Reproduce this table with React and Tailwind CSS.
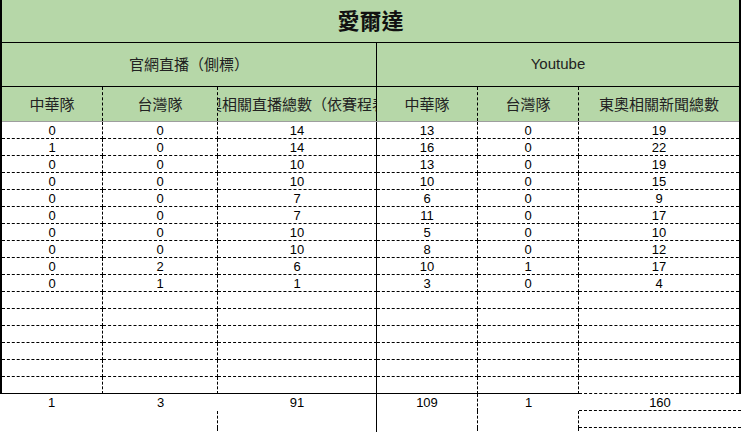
import React from "react";

const W = ["w-[101px]", "w-[115px]", "w-[159px]", "w-[101px]", "w-[101px]", "w-[160px]"];
const R = [
  "border-r border-black [border-right-style:dashed]",
  "border-r border-black [border-right-style:dashed]",
  "border-r border-black",
  "border-r border-black [border-right-style:dashed]",
  "border-r border-black [border-right-style:dashed]",
  "",
];

const rows = [
  [0, 0, 14, 13, 0, 19],
  [1, 0, 14, 16, 0, 22],
  [0, 0, 10, 13, 0, 19],
  [0, 0, 10, 10, 0, 15],
  [0, 0, 7, 6, 0, 9],
  [0, 0, 7, 11, 0, 17],
  [0, 0, 10, 5, 0, 10],
  [0, 0, 10, 8, 0, 12],
  [0, 2, 6, 10, 1, 17],
  [0, 1, 1, 3, 0, 4],
  ["", "", "", "", "", ""],
  ["", "", "", "", "", ""],
  ["", "", "", "", "", ""],
  ["", "", "", "", "", ""],
  ["", "", "", "", "", ""],
  ["", "", "", "", "", ""],
];

const heads = ["中華隊", "台灣隊", "東奧相關直播總數（依賽程表）", "中華隊", "台灣隊", "東奧相關新聞總數"];

const cjk = "font-['Noto_Sans_CJK_TC','Noto_Sans_CJK_SC',sans-serif]";
const num = "font-['Liberation_Sans',Arial,sans-serif]";

export default function App() {
  return (
    <div className="w-[741px] h-[432px] overflow-hidden bg-white text-black">
      <div className="w-[741px] border-l-2 border-r-2 border-black">
        {/* title */}
        <div className={`h-[43px] bg-[#b6d7a8] border-b border-black flex items-center justify-center pb-[4px] ${cjk}`}>
          <span className="text-[22px] font-bold leading-none text-[#111]">愛爾達</span>
        </div>
        {/* group headers */}
        <div className={`h-[44px] bg-[#b6d7a8] border-b border-black flex ${cjk}`}>
          <div className="w-[375px] border-r border-black flex items-center justify-center text-[15px] text-[#222]">
            官網直播（側標）
          </div>
          <div className={`w-[362px] flex items-center justify-center text-[15px] text-[#222] ${num}`}>
            Youtube
          </div>
        </div>
        {/* column headers */}
        <div className={`h-[35px] bg-[#b6d7a8] border-b border-[#9e9e9e] flex ${cjk}`}>
          {heads.map((h, i) => (
            <div
              key={i}
              className={`${W[i]} ${R[i]} h-full flex items-center justify-center overflow-hidden whitespace-nowrap text-[15px] text-[#222]`}
            >
              <span className="shrink-0">{h}</span>
            </div>
          ))}
        </div>
        {/* data rows */}
        {rows.map((r, ri) => {
          const last = ri === rows.length - 1;
          return (
            <div key={ri} className={`h-[17px] flex ${num}`}>
              {r.map((v, i) => (
                <div
                  key={i}
                  className={`${W[i]} ${R[i]} h-full border-b border-b-black ${
                    last && i < 5 ? "" : "[border-bottom-style:dashed]"
                  } flex items-center justify-center text-[13px] leading-none`}
                >
                  {v}
                </div>
              ))}
            </div>
          );
        })}
      </div>
      {/* totals */}
      <div className={`flex h-[17px] ${num}`}>
        <div className="w-[103px] flex items-center justify-center text-[13px] leading-none">1</div>
        <div className="w-[115px] flex items-center justify-center text-[13px] leading-none">3</div>
        <div className="w-[159px] border-r border-black flex items-center justify-center text-[13px] leading-none">91</div>
        <div className="w-[101px] border-r border-black [border-right-style:dashed] flex items-center justify-center text-[13px] leading-none">109</div>
        <div className="w-[101px] flex items-center justify-center text-[13px] leading-none">1</div>
        <div className="w-[162px] border-b border-black [border-bottom-style:dashed] flex items-center justify-center text-[13px] leading-none">160</div>
      </div>
      {[0, 1].map((k) => (
        <div key={k} className="flex h-[17px]">
          <div className="w-[103px]" />
          <div className="w-[115px] border-r border-black [border-right-style:dashed]" />
          <div className="w-[159px] border-r border-black" />
          <div className="w-[101px] border-r border-black [border-right-style:dashed]" />
          <div className="w-[101px] border-r border-black [border-right-style:dashed]" />
          <div className="w-[162px] border-b border-black [border-bottom-style:dashed]" />
        </div>
      ))}
    </div>
  );
}
